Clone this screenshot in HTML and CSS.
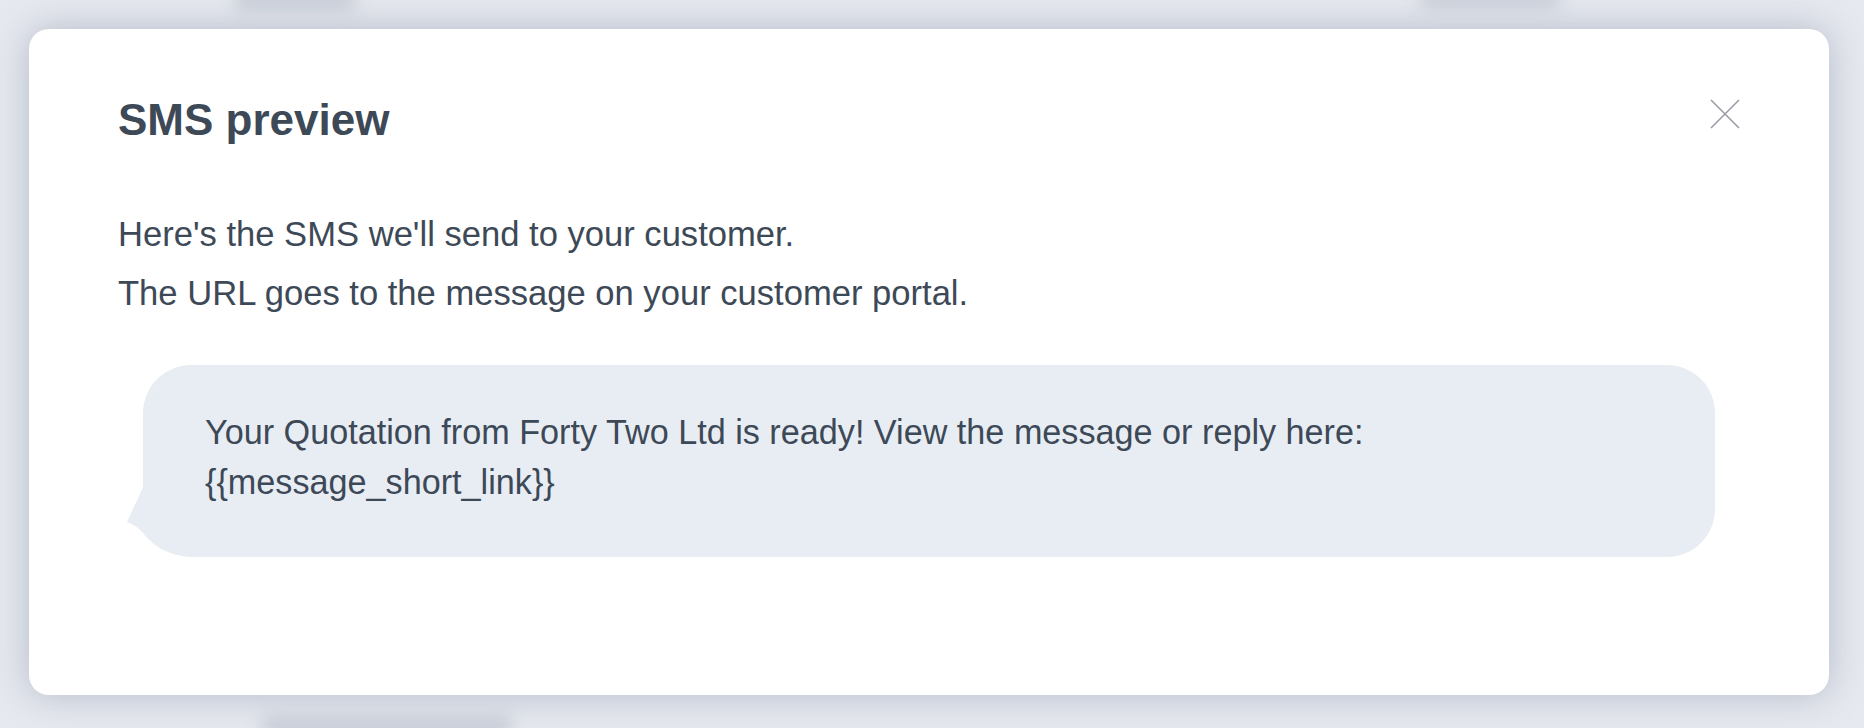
FILE: index.html
```html
<!DOCTYPE html>
<html lang="en">
<head>
<meta charset="utf-8">
<title>SMS preview</title>
<link rel="stylesheet" href="styles.css">
</head>
<body>
<div class="backdrop" aria-hidden="true">
  <span class="blob blob-a"></span>
  <span class="blob blob-b"></span>
  <span class="blob blob-c"></span>
</div>
<div class="overlay">
  <section class="modal" role="dialog" aria-labelledby="modal-title">
    <header class="modal-head">
      <h1 id="modal-title" class="modal-title">SMS preview</h1>
      <button class="close-btn" type="button" aria-label="Close">
        <svg width="30" height="30" viewBox="0 0 30 30" fill="none" stroke="#9a9ca6" stroke-width="1.6">
          <path d="M1 1 L29 29 M29 1 L1 29"/>
        </svg>
      </button>
    </header>
    <p class="intro">Here's the SMS we'll send to your customer.<br>The URL goes to the message on your customer portal.</p>
    <div class="bubble">
      <svg class="bubble-tail" width="60" height="80" viewBox="-20 110 60 80" aria-hidden="true">
        <path d="M2 118 L-16 157 C-9 160 -4 163 0 168 C 8 178 18 186 34 190 L 44 140 Z" fill="#e8edf4"/>
      </svg>
      <p class="bubble-text">Your Quotation from Forty Two Ltd is ready! View the message or reply here:<br>{{message_short_link}}</p>
    </div>
  </section>
</div>
</body>
</html>
```
FILE: styles.css
```css
html, body {
  margin: 0;
  padding: 0;
}

body {
  width: 1864px;
  height: 728px;
  overflow: hidden;
  background: #e6e9ef;
  font-family: "Liberation Sans", Arial, sans-serif;
  color: #3d4957;
  position: relative;
}

.backdrop {
  position: absolute;
  inset: 0;
}

.blob {
  position: absolute;
  background: #c9ced8;
  filter: blur(8px);
  border-radius: 6px;
}

.blob-a { left: 235px; top: -10px; width: 120px; height: 20px; }
.blob-b { left: 1420px; top: -10px; width: 140px; height: 18px; }
.blob-c { left: 262px; top: 716px; width: 250px; height: 20px; }

.overlay {
  position: relative;
  padding: 29px 35px 33px 29px;
}

.modal {
  width: 1800px;
  height: 666px;
  box-sizing: border-box;
  background: #ffffff;
  border-radius: 20px;
  box-shadow: 0 0 36px rgba(120, 130, 155, 0.45);
  padding: 66px 89px 0 89px;
}

.modal-head {
  display: flex;
  justify-content: space-between;
  align-items: flex-start;
}

.modal-title {
  margin: 0;
  font-size: 44px;
  line-height: 50px;
  font-weight: 700;
  color: #3d4957;
}

.close-btn {
  margin: 4px 0 0 0;
  padding: 0;
  border: 0;
  background: none;
  width: 30px;
  height: 30px;
  display: block;
  cursor: pointer;
}

.close-btn svg {
  display: block;
}

.intro {
  margin: 60px 0 0 0;
  font-size: 34.6px;
  line-height: 59px;
}

.bubble {
  position: relative;
  margin: 42px 25px 0 25px;
  background: #e8edf4;
  border-radius: 48px;
  padding: 42px 62px 50px 62px;
}

.bubble-tail {
  position: absolute;
  left: -20px;
  top: 110px;
  display: block;
}

.bubble-text {
  position: relative;
  margin: 0;
  font-size: 34.2px;
  line-height: 50px;
}
```
